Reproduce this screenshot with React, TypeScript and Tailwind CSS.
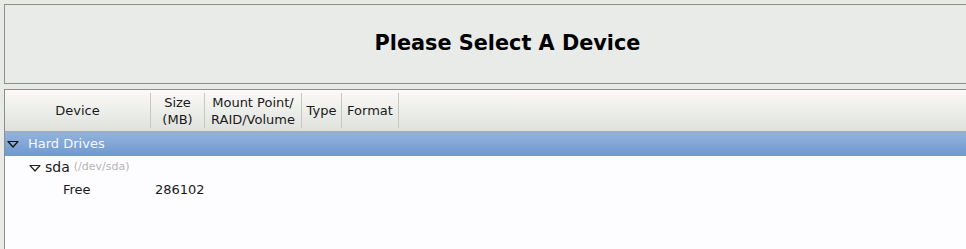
import React from "react";

const cols = [
  { label: ["Device"], w: "w-[146px]" },
  { label: ["Size", "(MB)"], w: "w-[54px]" },
  { label: ["Mount Point/", "RAID/Volume"], w: "w-[97px]" },
  { label: ["Type"], w: "w-[40px]" },
  { label: ["Format"], w: "w-[57px]" },
];

const Tri = ({ color }: { color: string }) => (
  <svg width="12" height="8" viewBox="0 0 12 8" className="shrink-0">
    <path d="M1 1.5 L11 1.5 L6 7 Z" fill="none" stroke={color} strokeWidth="1.2" strokeLinejoin="round" />
  </svg>
);

export default function App() {
  return (
    <div
      className="w-[966px] h-[249px] overflow-hidden bg-[#e8eae6] pt-[4px] pl-[4px] text-[13px] text-[#1a1a1a]"
      style={{ fontFamily: '"DejaVu Sans", "Liberation Sans", sans-serif' }}
    >
      {/* header panel */}
      <div className="h-[80px] border border-r-0 border-[#8e8e8e] bg-[#e8ebe7] flex items-center justify-center">
        <h1 className="text-[20.8px] font-bold text-black pl-[44px]">Please Select A Device</h1>
      </div>

      {/* device tree */}
      <div className="mt-[5px] border-t border-l border-[#8e8e8e] bg-[#fdfcff] h-[200px]">
        <div className="flex h-[42px] border-b border-[#a8a8a8] bg-gradient-to-b from-[#fdf9f8] via-[#eceeea] to-[#dfe1de]">
          {cols.map((c, i) => (
            <div
              key={i}
              className={`${c.w} shrink-0 flex flex-col items-center justify-center leading-[17px] border-r border-[#c6c6c4] my-[3px]`}
            >
              {c.label.map((l) => (
                <span key={l}>{l}</span>
              ))}
            </div>
          ))}
        </div>

        <div className="flex items-center h-[24px] bg-gradient-to-b from-[#93b3de] to-[#7099cf] pl-[2px]">
          <Tri color="#111" />
          <span className="ml-[9px] text-[#f4f8ff]">Hard Drives</span>
        </div>

        <div className="flex items-center h-[23px] pl-[24px]">
          <Tri color="#222" />
          <span className="ml-[4px] text-[14px]">sda</span>
          <span className="ml-[4px] text-[11px] text-[#b5b5b5]">(/dev/sda)</span>
        </div>

        <div className="flex items-center h-[22px]">
          <span className="pl-[58px] w-[150px]">Free</span>
          <span>286102</span>
        </div>
      </div>
    </div>
  );
}
